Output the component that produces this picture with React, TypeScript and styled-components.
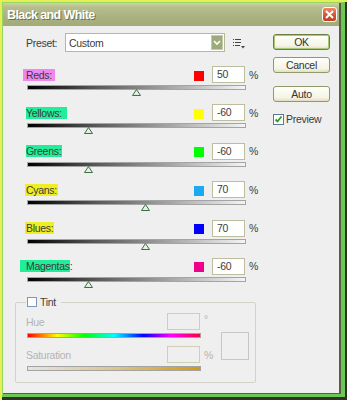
import React from 'react'
import styled, { createGlobalStyle } from 'styled-components'

const GlobalStyle = createGlobalStyle`
  html, body { margin: 0; padding: 0; background: #2e3322; }
  body { font-family: "Liberation Sans", Arial, sans-serif; }
`

type Channel = {
  name: string
  tail: string
  value: number
  swatch: string
  mark: string
  markL: number
  markR: number
}

const channels: Channel[] = [
  { name: 'Reds:', tail: '', value: 50, swatch: '#ff0000', mark: '#ee88ee', markL: 3, markR: 3 },
  { name: 'Yellows:', tail: '', value: -60, swatch: '#ffff00', mark: '#22ee99', markL: 0, markR: 5 },
  { name: 'Greens:', tail: '', value: -60, swatch: '#00ff00', mark: '#22ee99', markL: 0, markR: 1 },
  { name: 'Cyans:', tail: '', value: 70, swatch: '#1aaaf0', mark: '#eeee22', markL: 1, markR: 1 },
  { name: 'Blues:', tail: '', value: 70, swatch: '#0000ff', mark: '#eeee22', markL: 1, markR: 1 },
  { name: 'Magentas', tail: ':', value: -60, swatch: '#ee0088', mark: '#22ee99', markL: 6, markR: 0 },
]

// slider range -200 .. 300
const toPercent = (v: number) => ((v + 200) / 500) * 100

const Screen = styled.div`
  width: 347px;
  height: 400px;
  box-sizing: border-box;
  border-top: 2px solid #e4f05a;
  border-left: 2px solid #e4f05a;
  padding-right: 2px;
  padding-bottom: 3px;
  background: #2e3322;
  display: flex;
  flex-direction: column;
`

const Frame = styled.div`
  flex: 1;
  display: flex;
  flex-direction: column;
  border-top: 1px solid #9ad45a;
  border-left: 1px solid #9ad45a;
  border-right: 4px solid #6cc852;
  border-bottom: 3px solid #6cc852;
`

const Window = styled.div`
  flex: 1;
  display: flex;
  flex-direction: column;
  border-right: 2px solid #585e40;
  border-bottom: 1px solid #585e40;
  background: #efefef;
`

const TitleBar = styled.div`
  height: 23px;
  flex-shrink: 0;
  display: flex;
  align-items: center;
  justify-content: space-between;
  padding: 0 2px 0 4px;
  background: linear-gradient(#ccd4a8 0, #b6be8e 18%, #aab282 60%, #a2aa78 100%);
`

const Title = styled.span`
  color: #fff;
  font-weight: bold;
  font-size: 12.5px;
  letter-spacing: -0.6px;
  text-shadow: 1px 1px 0 #6c7248;
`

const CloseButton = styled.div`
  width: 15px;
  height: 15px;
  box-sizing: border-box;
  border: 1px solid #fff;
  border-radius: 3px;
  background: linear-gradient(#ec8a66, #d4502e 60%, #c2401f);
  display: flex;
  align-items: center;
  justify-content: center;
`

const Body = styled.div`
  flex: 1;
  display: flex;
  gap: 15px;
  padding-left: 12px;
  font-size: 10.5px;
  letter-spacing: -0.3px;
  color: #3c3c3c;
`

const LeftCol = styled.div`
  width: 243px;
  display: flex;
  flex-direction: column;
  padding-top: 7px;
`

const PresetRow = styled.div`
  height: 19px;
  display: flex;
  align-items: center;
  padding-left: 11px;
`

const PresetLabel = styled.span`
  width: 39px;
`

const Select = styled.div`
  width: 160px;
  height: 19px;
  box-sizing: border-box;
  border: 1px solid #b5b99a;
  background: #fff;
  display: flex;
  align-items: center;
  padding-left: 3px;
`

const DropButton = styled.div`
  margin-left: auto;
  margin-right: 1px;
  width: 12px;
  height: 15px;
  box-sizing: border-box;
  border: 1px solid #c4ccaa;
  background: #9daa7c;
  display: flex;
  align-items: center;
  justify-content: center;
`

const OptionsIcon = styled.svg`
  margin-left: 8px;
  margin-top: 2px;
`

const Rows = styled.div`
  margin-top: 14px;
  padding-left: 11px;
  display: flex;
  flex-direction: column;
`

const Row = styled.div`
  height: 38.4px;
  display: flex;
  flex-direction: column;
`

const TopLine = styled.div`
  height: 17px;
  display: flex;
  align-items: center;
`

const Label = styled.span<{ $mark?: string; $l?: number; $r?: number }>`
  margin-left: ${(p) => -(p.$l ?? 0)}px;
  padding: 0 ${(p) => p.$r ?? 0}px 0 ${(p) => p.$l ?? 0}px;
  height: 12px;
  line-height: 12px;
  background: ${(p) => p.$mark ?? 'transparent'};
  color: ${(p) => (p.$mark ? '#3a3a3a' : 'inherit')};
`

const Spacer = styled.span`
  flex: 1;
`

const Swatch = styled.span<{ $color: string }>`
  width: 10px;
  height: 10px;
  margin-top: 2px;
  margin-right: 8px;
  background: ${(p) => p.$color};
`

const Input = styled.div<{ $disabled?: boolean }>`
  width: 33px;
  height: 17px;
  box-sizing: border-box;
  border: 1px solid ${(p) => (p.$disabled ? '#cfcfb4' : '#bdbd9f')};
  background: ${(p) => (p.$disabled ? '#efefef' : '#fff')};
  padding-left: 4px;
  line-height: 15px;
`

const Unit = styled.span<{ $w?: number; $top?: boolean }>`
  width: ${(p) => p.$w ?? 9}px;
  margin-left: 4px;
  align-self: ${(p) => (p.$top ? 'flex-start' : 'center')};
`

const Slider = styled.div`
  position: relative;
  margin: 2px 0 0 1px;
  width: 219px;
  height: 5px;
`

const Track = styled.div<{ $fill: string; $w?: number }>`
  width: ${(p) => p.$w ?? 219}px;
  height: 5px;
  box-sizing: border-box;
  border: 1px solid #a4a4a4;
  background: ${(p) => p.$fill};
`

const Thumb = styled.svg`
  position: absolute;
  top: 4px;
  margin-left: -4.5px;
`

const TintGroup = styled.fieldset`
  margin: 0;
  width: 241px;
  box-sizing: border-box;
  border: 1px solid #d2d2ca;
  border-radius: 2px;
  padding: 5px 6px 11px 10px;
  color: #b4b4b4;
`

const Legend = styled.legend`
  display: flex;
  align-items: center;
  height: 12px;
  padding: 0 5px 0 1px;
  color: #404040;
`

const Checkbox = styled.span`
  width: 10px;
  height: 10px;
  box-sizing: border-box;
  border: 1px solid #7a98b4;
  background: #fff;
  display: flex;
  align-items: center;
  justify-content: center;
`

const TintBody = styled.div`
  display: flex;
  gap: 9px;
`

const TintControls = styled.div`
  width: 186px;
  display: flex;
  flex-direction: column;
`

const TintBar = styled(Track)`
  margin: 3px 0 8px 1px;
  &:last-child {
    margin-bottom: 0;
  }
`

const ColorBox = styled.div`
  margin-top: 19px;
  width: 28px;
  height: 28px;
  box-sizing: border-box;
  border: 1px solid #c6c6c6;
`

const RightCol = styled.div`
  width: 57px;
  padding-top: 8px;
  display: flex;
  flex-direction: column;
`

const Button = styled.div<{ $default?: boolean; $gap: number }>`
  margin-top: ${(p) => p.$gap}px;
  height: 16px;
  box-sizing: border-box;
  border: 1px solid ${(p) => (p.$default ? '#6f7e40' : '#8f9a68')};
  border-radius: 3px;
  box-shadow: ${(p) => (p.$default ? 'inset 0 0 0 1px #a8c878' : 'none')};
  background: linear-gradient(#fffffa, #f6f4e6 75%, #e2dec4);
  display: flex;
  align-items: center;
  justify-content: center;
  color: #333;
`

const PreviewRow = styled.div`
  margin-top: 11px;
  display: flex;
  align-items: center;
`

const PreviewBox = styled(Checkbox)`
  width: 11px;
  height: 11px;
  border-color: #5d7890;
  margin-right: 2px;
`

const hue =
  'linear-gradient(to right, #ff0000, #ffff00 17%, #00ff00 33%, #00ffff 50%, #0000ff 67%, #ff00ff 83%, #ff0040)'
const gray = 'linear-gradient(to right, #000, #555 30%, #b0b0b0 70%, #f4f4f4)'
const sat = 'linear-gradient(to right, #e4e4e4, #dcc58e 50%, #d8980c)'

export default function App() {
  return (
    <>
      <GlobalStyle />
      <Screen>
        <Frame>
          <Window>
            <TitleBar>
              <Title>Black and White</Title>
              <CloseButton>
                <svg width="9" height="9" viewBox="0 0 9 9">
                  <path d="M1 1 L8 8 M8 1 L1 8" stroke="#fff" strokeWidth="2" />
                </svg>
              </CloseButton>
            </TitleBar>
            <Body>
              <LeftCol>
                <PresetRow>
                  <PresetLabel>Preset:</PresetLabel>
                  <Select>
                    Custom
                    <DropButton>
                      <svg width="8" height="6" viewBox="0 0 8 6">
                        <path d="M1 1 L4 4 L7 1" stroke="#fff" strokeWidth="1.6" fill="none" />
                      </svg>
                    </DropButton>
                  </Select>
                  <OptionsIcon width="12" height="10" viewBox="0 0 12 10">
                    <path d="M0 0.5h1 M0 3.5h1 M0 6.5h1 M2 0.5h6 M2 3.5h6 M2 6.5h5" stroke="#444" />
                    <path d="M8 7h4l-2 2.5z" fill="#444" />
                  </OptionsIcon>
                </PresetRow>
                <Rows>
                  {channels.map((c) => (
                    <Row key={c.name}>
                      <TopLine>
                        <Label $mark={c.mark} $l={c.markL} $r={c.markR}>
                          {c.name}
                        </Label>
                        {c.tail && <Label>{c.tail}</Label>}
                        <Spacer />
                        <Swatch $color={c.swatch} />
                        <Input>{c.value}</Input>
                        <Unit>%</Unit>
                      </TopLine>
                      <Slider>
                        <Track $fill={gray} />
                        <Thumb
                          width="9"
                          height="7"
                          viewBox="0 0 9 7"
                          style={{ left: `${toPercent(c.value)}%` }}
                        >
                          <path d="M4.5 0.5 L8.5 6.5 L0.5 6.5 Z" fill="#e4f0e4" stroke="#3e6e44" />
                        </Thumb>
                      </Slider>
                    </Row>
                  ))}
                </Rows>
                <TintGroup>
                  <Legend>
                    <Checkbox />
                    <Label style={{ marginLeft: 3 }}>Tint</Label>
                  </Legend>
                  <TintBody>
                    <TintControls>
                      <TopLine>
                        <Label>Hue</Label>
                        <Spacer />
                        <Input $disabled />
                        <Unit $w={8} $top>°</Unit>
                      </TopLine>
                      <TintBar $fill={hue} $w={174} />
                      <TopLine>
                        <Label>Saturation</Label>
                        <Spacer />
                        <Input $disabled />
                        <Unit $w={8}>%</Unit>
                      </TopLine>
                      <TintBar $fill={sat} $w={174} />
                    </TintControls>
                    <ColorBox />
                  </TintBody>
                </TintGroup>
              </LeftCol>
              <RightCol>
                <Button $default $gap={0}>OK</Button>
                <Button $gap={7}>Cancel</Button>
                <Button $gap={13}>Auto</Button>
                <PreviewRow>
                  <PreviewBox>
                    <svg width="9" height="9" viewBox="0 0 9 9">
                      <path d="M1.5 4.5 L3.5 6.5 L7.5 1.5" stroke="#22a022" strokeWidth="1.8" fill="none" />
                    </svg>
                  </PreviewBox>
                  Preview
                </PreviewRow>
              </RightCol>
            </Body>
          </Window>
        </Frame>
      </Screen>
    </>
  )
}
